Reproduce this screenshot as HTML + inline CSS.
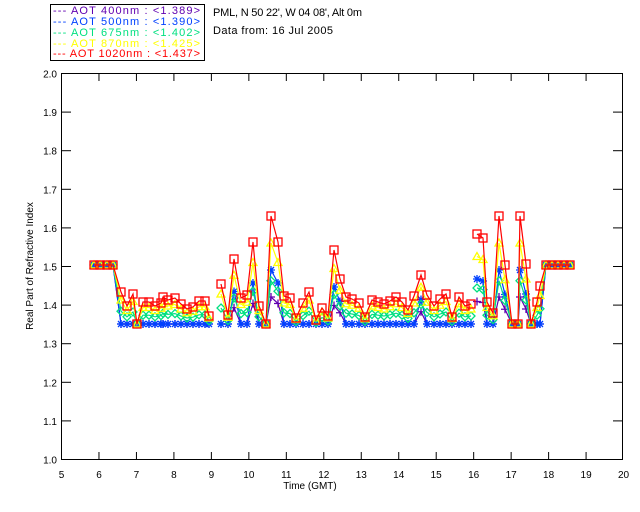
<!DOCTYPE html>
<html><head><meta charset="utf-8"><style>
body{margin:0;background:#fff;width:640px;height:512px;overflow:hidden}
svg{display:block;font-family:"Liberation Sans",sans-serif}
</style></head><body>
<svg id="s" width="640" height="512" viewBox="0 0 640 512" xmlns="http://www.w3.org/2000/svg">
<rect x="50.5" y="4.5" width="154" height="56" fill="#fff" stroke="#000" stroke-width="1"/>
<g font-size="11">
<text x="53" y="14" fill="#6000b0" textLength="147" lengthAdjust="spacing">--- AOT  400nm : &lt;1.389&gt;</text>
<text x="53" y="25" fill="#0040ff" textLength="147" lengthAdjust="spacing">--- AOT  500nm : &lt;1.390&gt;</text>
<text x="53" y="36" fill="#00e080" textLength="147" lengthAdjust="spacing">--- AOT  675nm : &lt;1.402&gt;</text>
<text x="53" y="47" fill="#ffff00" textLength="147" lengthAdjust="spacing">--- AOT  870nm : &lt;1.425&gt;</text>
<text x="53" y="57" fill="#ff0000" textLength="147" lengthAdjust="spacing">--- AOT 1020nm : &lt;1.437&gt;</text>
<text x="213" y="16" fill="#000" textLength="149" lengthAdjust="spacing">PML, N 50 22', W 04 08', Alt 0m</text>
<text x="213" y="34" fill="#000" textLength="120" lengthAdjust="spacing">Data from: 16 Jul 2005</text>
</g>
<g id="axes" stroke="#000" fill="none" stroke-width="1"></g>
<g id="lbl" font-size="10" fill="#000"></g>
<text x="310" y="489" font-size="10" text-anchor="middle">Time (GMT)</text>
<text transform="translate(33,266) rotate(-90)" font-size="10" text-anchor="middle">Real Part of Refractive Index</text>
<g id="data"></g>
</svg>
<script>
var ns="http://www.w3.org/2000/svg";
function el(p,t,a,txt){var e=document.createElementNS(ns,t);for(var k in a)e.setAttribute(k,a[k]);if(txt)e.textContent=txt;p.appendChild(e);return e;}
var ax=document.getElementById('axes'),lb=document.getElementById('lbl'),dg=document.getElementById('data');
el(ax,'rect',{x:61.5,y:73.5,width:561,height:386});
for(var h=5;h<=20;h++){var x=61.5+(h-5)*37.47;
 if(h>5&&h<20){el(ax,'line',{x1:x,y1:459,x2:x,y2:452});el(ax,'line',{x1:x,y1:74,x2:x,y2:81});}
 el(lb,'text',{x:x,y:478,'text-anchor':'middle'},String(h));}
for(var i=0;i<=10;i++){var y=459.5-i*38.6;
 if(i>0&&i<10){el(ax,'line',{x1:62,y1:y,x2:71,y2:y});el(ax,'line',{x1:622,y1:y,x2:613,y2:y});}
 el(lb,'text',{x:57,y:y+4,'text-anchor':'end'},(1+i/10).toFixed(1));}
var R=[[94,265],[100,265],[107,265],[113,265],[121,292],[127,306],[133,294],[137,324],[143,302],[149,302],[155,306],[161,303],[163,297],[168,300],[175,298],[181,304],[187,309],[193,307],[199,301],[205,301],[209,316],null,[221,284],[228,315],[234,259],[241,298],[247,295],[253,242],[259,306],[266,324],[271,216],[278,242],[284,296],[290,298],[296,318],[303,303],[309,292],[316,320],[322,308],[328,316],[334,250],[340,279],[346,297],[352,299],[359,303],[365,317],[372,300],[378,302],[384,304],[390,301],[396,297],[402,302],[408,310],[414,296],[421,275],[427,295],[434,306],[440,299],[446,294],[452,317],[459,297],[465,306],[471,304],null,[477,234],[483,238],[487,302],[493,313],[499,216],[505,265],[512,324],[518,324],[520,216],[526,264],[531,324],[537,302],[540,286],[546,265],[552,265],[558,265],[564,265],[570,265]];
function ser(f,low){return R.map(function(p){if(!p)return null;if(p[1]==265&&(p[0]<115||p[0]>543))return [p[0],265];
 if(low){ if(p[1]<282) return [p[0],p[1]+(324-p[1])*f]; return [p[0],324]; }
 return [p[0],p[1]+(324-p[1])*f];});}
var S=[{c:'#6000b0',f:0.75,m:'plus',low:1},{c:'#0040ff',f:0.5,m:'star',low:1},{c:'#00e080',f:0.6,m:'dia'},{c:'#ffff00',f:0.25,m:'tri'},{c:'#ff0000',f:0,m:'sq'}];
S.forEach(function(s){var pts=ser(s.f,s.low),seg=[];
 function flush(){if(seg.length)el(dg,'polyline',{points:seg.join(' '),fill:'none',stroke:s.c,'stroke-width':1.2});seg=[];}
 pts.forEach(function(p){if(!p){flush();return;}seg.push(p[0]+','+p[1]);});flush();
 pts.forEach(function(p){if(!p)return;var x=p[0],y=p[1],a={fill:'none',stroke:s.c,'stroke-width':1.3};
  if(s.m=='sq')el(dg,'rect',Object.assign(a,{x:x-4,y:y-4,width:8,height:8}));
  else if(s.m=='tri')el(dg,'polygon',Object.assign(a,{points:(x)+','+(y-4)+' '+(x-4)+','+(y+3)+' '+(x+4)+','+(y+3)}));
  else if(s.m=='dia')el(dg,'polygon',Object.assign(a,{points:x+','+(y-4)+' '+(x+4)+','+y+' '+x+','+(y+4)+' '+(x-4)+','+y}));
  else if(s.m=='star')el(dg,'path',Object.assign(a,{d:'M'+(x-4)+' '+y+'h8M'+x+' '+(y-4)+'v8M'+(x-3)+' '+(y-3)+'l6 6M'+(x+3)+' '+(y-3)+'l-6 6'}));
  else el(dg,'path',Object.assign(a,{d:'M'+(x-4)+' '+y+'h8M'+x+' '+(y-4)+'v8'}));
 });
});
</script>
</body></html>
